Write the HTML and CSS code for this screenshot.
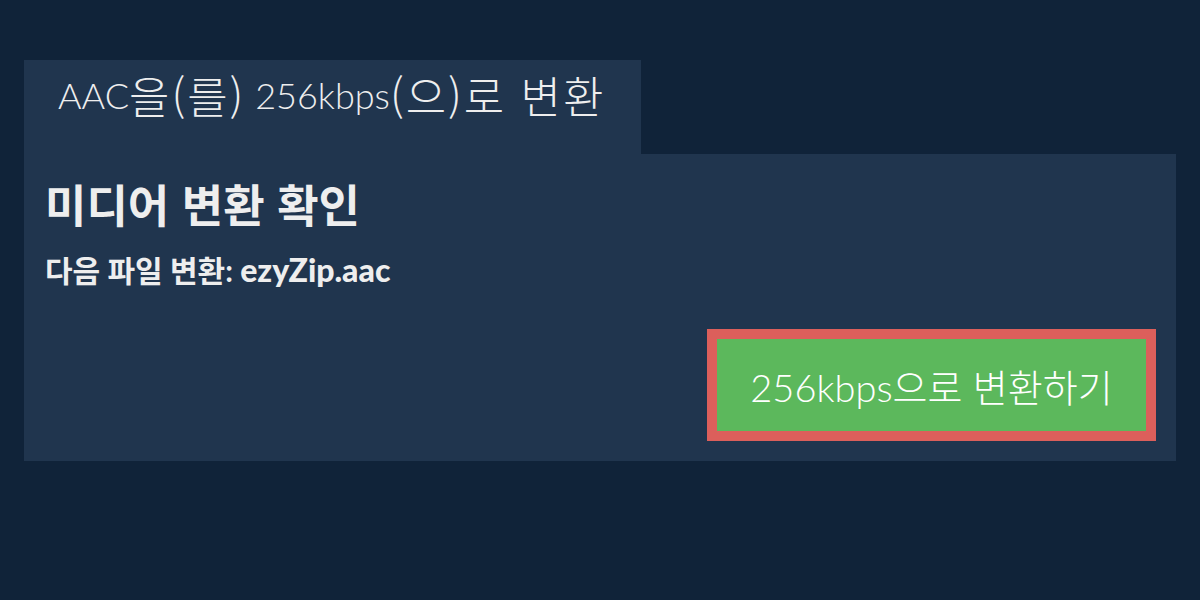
FILE: index.html
```html
<!DOCTYPE html>
<html lang="ko">
<head>
<meta charset="utf-8">
<title>AAC을(를) 256kbps(으)로 변환</title>
<link rel="stylesheet" href="styles.css">
</head>
<body>
<div class="wrap">
  <div class="tab"><span class="tab-text">AAC<span class="ko">을(를)</span> 256kbps<span class="ko">(으)로 변환</span></span></div>
  <div class="panel">
    <h1 class="title">미디어 변환 확인</h1>
    <p class="file">다음 파일 변환: <strong class="fname">ezyZip.aac</strong></p>
    <div class="actions">
      <button class="convert">256kbps으로 변환하기</button>
    </div>
  </div>
</div>
</body>
</html>
```
FILE: styles.css
```css
html, body {
  margin: 0;
  padding: 0;
  background: #102339;
  height: 100%;
}
body {
  font-family: Lato, "Noto Sans CJK KR", sans-serif;
  color: #eeeeee;
}
.wrap {
  padding: 60px 24px 0 24px;
  display: flex;
  flex-direction: column;
  align-items: flex-start;
}
.tab {
  background: #20354e;
  height: 94px;
  box-sizing: border-box;
  padding: 0 36px 22px 34px;
  display: flex;
  align-items: center;
  font-size: 36px;
  font-weight: 300;
  color: #eeeeee;
  white-space: nowrap;
}
.tab-text {
  line-height: 44px;
}
.ko {
  font-family: "Noto Sans CJK KR", sans-serif;
  font-size: 1.22em;
  font-weight: 300;
  letter-spacing: 2px;
  vertical-align: -0.12em;
  line-height: 1;
}
.panel {
  background: #20354e;
  align-self: stretch;
  box-sizing: border-box;
  height: 307px;
  padding: 20px 20px 20px 21px;
  display: flex;
  flex-direction: column;
}
.title {
  margin: 4px 0 0 0;
  font-family: "Noto Sans CJK KR", sans-serif;
  font-size: 45px;
  font-weight: 700;
  line-height: 52px;
  color: #eeeeee;
}
.file {
  margin: 22px 0 0 0;
  font-size: 30px;
  font-weight: 700;
  line-height: 36px;
  color: #eeeeee;
}
.fname {
  font-size: 32px;
}
.actions {
  margin-top: auto;
  display: flex;
  justify-content: flex-end;
}
.convert {
  width: 449px;
  height: 112px;
  box-sizing: border-box;
  border: 10px solid #dc5f5b;
  background: #5cb85c;
  color: #ffffff;
  font-family: Lato, "Noto Sans CJK KR", sans-serif;
  font-size: 38px;
  font-weight: 300;
  padding: 0;
  cursor: pointer;
}
```
